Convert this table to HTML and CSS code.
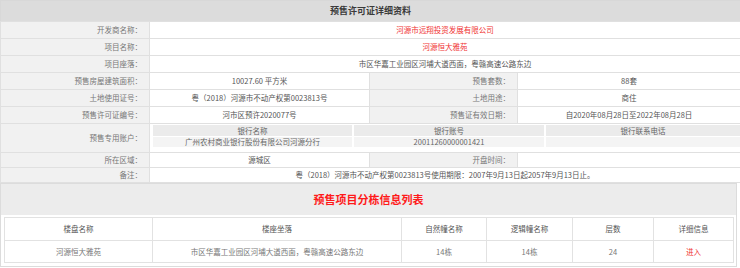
FILE: index.html
```html
<!DOCTYPE html>
<html lang="zh-CN">
<head>
<meta charset="utf-8">
<title>预售许可证详细资料</title>
<link rel="stylesheet" href="styles.css">
</head>
<body>
<table class="info">
  <colgroup><col class="c1"><col class="c2"><col class="c3"><col class="c4"></colgroup>
  <tr class="head"><th colspan="4">预售许可证详细资料</th></tr>
  <tr><td class="lab">开发商名称：</td><td class="val red" colspan="3">河源市远翔投资发展有限公司</td></tr>
  <tr><td class="lab">项目名称：</td><td class="val red" colspan="3">河源恒大雅苑</td></tr>
  <tr><td class="lab">项目座落：</td><td class="val" colspan="3">市区华嘉工业园区河埔大道西面，粤赣高速公路东边</td></tr>
  <tr><td class="lab">预售房屋建筑面积：</td><td class="val">10027.60 平方米</td><td class="lab">预售套数：</td><td class="val">88套</td></tr>
  <tr><td class="lab">土地使用证号：</td><td class="val">粤（2018）河源市不动产权第0023813号</td><td class="lab">土地用途：</td><td class="val">商住</td></tr>
  <tr><td class="lab">预售许可证编号：</td><td class="val">河市区预许2020077号</td><td class="lab">预售证有效日期：</td><td class="val">自2020年08月28日至2022年08月28日</td></tr>
  <tr class="acct"><td class="lab">预售专用账户：</td><td class="val nest" colspan="3">
    <table class="bank">
      <colgroup><col class="b1"><col class="b2"><col class="b3"></colgroup>
      <tr class="bh"><td>银行名称</td><td>银行账号</td><td>银行联系电话</td></tr>
      <tr class="bd"><td>广州农村商业银行股份有限公司河源分行</td><td>20011260000001421</td><td></td></tr>
    </table>
  </td></tr>
  <tr class="short"><td class="lab">所在区域：</td><td class="val">源城区</td><td class="lab">开盘时间：</td><td class="val"></td></tr>
  <tr class="short"><td class="lab">备注：</td><td class="val" colspan="3">粤（2018）河源市不动产权第0023813号使用期限：2007年9月13日起2057年9月13日止。</td></tr>
</table>
<div class="section">
  <div class="sec-title">预售项目分栋信息列表</div>
  <table class="list">
    <colgroup><col class="l1"><col class="l2"><col class="l3"><col class="l4"><col class="l5"><col class="l6"></colgroup>
    <tr class="lh"><td>楼盘名称</td><td>楼座坐落</td><td>自然幢名称</td><td>逻辑幢名称</td><td>层数</td><td>详细信息</td></tr>
    <tr class="ld"><td>河源恒大雅苑</td><td>市区华嘉工业园区河埔大道西面，粤赣高速公路东边</td><td>14栋</td><td>14栋</td><td>24</td><td class="red">进入</td></tr>
  </table>
</div>
</body>
</html>
```
FILE: styles.css
```css
html, body {
  margin: 0;
  padding: 0;
  background: #fff;
}
body {
  font-family: "Noto Sans CJK SC", "Microsoft YaHei", sans-serif;
  font-size: 7.5px;
  color: #555;
}
table {
  border-collapse: collapse;
  table-layout: fixed;
}
td, th {
  padding: 0;
  line-height: 10px;
  white-space: nowrap;
  overflow: hidden;
}
.info {
  width: 740px;
  border: 1px solid #d8d8d8;
}
.c1 { width: 149px; }
.c2 { width: 220px; }
.c3 { width: 148px; }
.c4 { width: 223px; }
.info td {
  border: 1px solid #e0e0e0;
  height: 16px;
}
.head th {
  height: 20px;
  background: #dcdcdc;
  font-size: 9px;
  font-weight: bold;
  color: #3a3a3a;
  text-align: center;
}
.lab {
  background: #f1f1f1;
  color: #777;
  text-align: right;
  padding-right: 7px;
}
.val {
  background: #fff;
  text-align: center;
  color: #555;
}
.red {
  color: #f03232;
}
.info tr.acct td.lab {
  height: 27px;
}
.info td.nest {
  padding: 0 1px 4px 1px;
  vertical-align: top;
}
.bank {
  width: 100%;
  border-collapse: separate;
  border-spacing: 2px 1px;
}
.b1 { width: 199px; }
.b2 { width: 190px; }
.b3 { width: 194px; }
.info .bank td {
  border: none;
  height: 10px;
  text-align: center;
  color: #666;
}
.bank .bh td {
  background: #ebebeb;
  height: 11px;
}
.bank .bd td {
  background: #f4f4f4;
}
.info tr.short td {
  height: 14px;
}
.section {
  width: 735px;
  border: 1px solid #dcdcdc;
  padding-bottom: 3px;
}
.sec-title {
  height: 31px;
  line-height: 31px;
  background: #ececec;
  color: #ff1a1a;
  font-size: 11px;
  font-weight: bold;
  text-align: center;
}
.list {
  width: 729px;
  margin: 2px 0 0 3px;
  border: 1px solid #dedede;
}
.l1 { width: 148px; }
.l2 { width: 249px; }
.l3 { width: 85px; }
.l4 { width: 86px; }
.l5 { width: 81px; }
.l6 { width: 80px; }
.list td {
  border: 1px solid #e2e2e2;
  text-align: center;
  color: #555;
}
.list .lh td {
  height: 22px;
}
.list .ld td {
  height: 21px;
  color: #777;
}
.list .ld td.red {
  color: #f03232;
}
```
